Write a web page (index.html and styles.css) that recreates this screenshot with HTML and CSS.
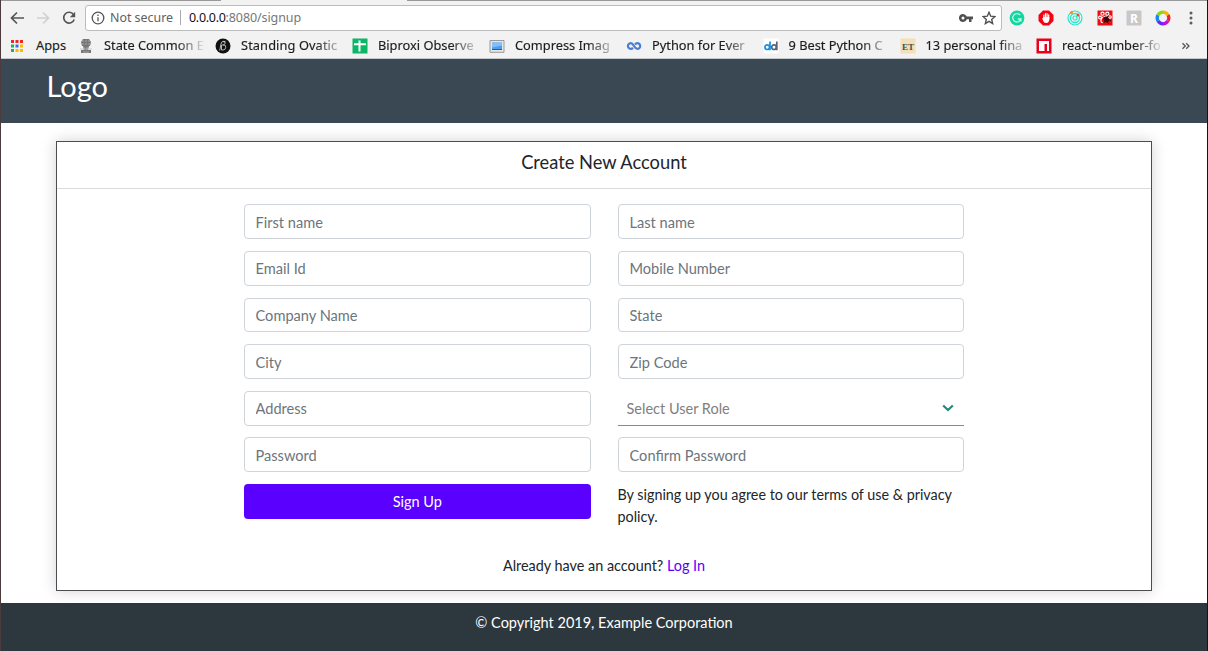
FILE: index.html
```html
<!DOCTYPE html>
<html lang="en">
<head>
<meta charset="utf-8">
<title>Create New Account</title>
<link rel="stylesheet" href="styles.css">
</head>
<body>
<div class="window">
  <div class="browser">
    <div class="tabstrip"></div>
    <div class="toolbar">
      <svg class="nav back" viewBox="0 0 16 16"><path d="M15 8H3M8 2.500 2.500 8 8 13.500"/></svg>
      <svg class="nav forward" viewBox="0 0 16 16"><path d="M2 8h11M8 2.500 13.500 8 8 13.500"/></svg>
      <svg class="nav reload" viewBox="0 0 16 16"><path d="M12.500 4.500A5.400 5.400 0 1 0 13.200 9.500"/><path class="solid" d="M14.200 1.800v5.400H8.800z"/></svg>
      <div class="address">
        <svg class="info" viewBox="0 0 14 14"><circle cx="7" cy="7" r="5.800"/><path d="M7 6.200V10.300M7 3.600V5"/></svg>
        <span class="secure">Not secure</span>
        <span class="divider"></span>
        <span class="url"><span class="host">0.0.0.0</span><span class="path">:8080/signup</span></span>
        <svg class="key" viewBox="0 0 14 10"><path fill-rule="evenodd" d="M4 1a4 4 0 1 0 3.800 5.200H10V9h2.500V6.200H14V3.500H7.700A4 4 0 0 0 4 1zm0 2.500a1.500 1.500 0 1 1 0 3 1.500 1.500 0 0 1 0-3z"/></svg>
        <svg class="star" viewBox="0 0 14 14"><path d="m7 1.300 1.700 3.900 4.200.4-3.200 2.800.95 4.200L7 10.400l-3.650 2.200.95-4.200L1.100 5.600l4.200-.4z"/></svg>
      </div>
      <div class="extensions">
        <svg viewBox="0 0 16 16"><circle cx="8" cy="8" r="7.400" fill="#11d6a0"/><path d="M11.300 5.200A4.200 4.200 0 1 0 12 9H8.800M11.900 8.500v3" fill="none" stroke="#c4f9e8" stroke-width="1.300"/></svg>
        <svg viewBox="0 0 16 16"><path d="M5 .5h6L15.500 5v6L11 15.500H5L.5 11V5z" fill="#f70012"/><path d="M5.900 8V5.200M7.500 8V3.700M9.100 8V3.500M10.700 9V4.900" stroke="#fff" stroke-width="1.200" stroke-linecap="round"/><path d="m4 8 1.300.4V7h6v2.500c0 2-1.100 3.400-3.200 3.400-2 0-2.500-1-4.100-4.900z" fill="#fff"/></svg>
        <svg viewBox="0 0 16 16" fill="none" stroke="#24e8ca"><circle cx="8" cy="8" r="7" stroke-width="1.200"/><circle cx="8" cy="8" r="4.500" stroke-width="1.300"/><circle cx="8" cy="8" r="2" stroke-width="1.200"/><circle cx="4.500" cy="2.500" r="1.500" fill="#ff8a18" stroke="none"/><circle cx="11" cy="5" r="1.500" fill="#f24b25" stroke="none"/></svg>
        <svg viewBox="0 0 16 16"><path d="M.5.500h15v15H.5z" fill="#ee0b12"/><g fill="none" stroke="#fff" stroke-width="1.100"><circle cx="5.500" cy="3.700" r="1.600"/><circle cx="10.300" cy="3.700" r="1.600"/><circle cx="3" cy="7.500" r="1.400"/><circle cx="13" cy="7" r="1.300"/><path d="M6 7C3.500 8.500 3 12.500 5.800 12.800M6.500 6.500l4-.5"/></g><ellipse cx="9.300" cy="9.500" rx="3" ry="2.500" transform="rotate(40 9.300 9.500)" fill="#42060b"/><path d="m9 11 3 3M11 9l3 2M8 11l-1 2M10 7l2-1" stroke="#42060b"/></svg>
        <svg viewBox="0 0 16 16"><path d="M.5.500h15v15H.5z" fill="#c8c8c8"/><text x="8" y="12.500" class="ext-letter">R</text></svg>
        <svg viewBox="0 0 16 16" fill="none" stroke-width="3.300"><path d="M8 2.200A5.800 5.800 0 0 1 13 5.100" stroke="#ffb000"/><path d="M13 5.100A5.800 5.800 0 0 1 13 10.900" stroke="#f2202f"/><path d="M13 10.900A5.800 5.800 0 0 1 8 13.800" stroke="#bf10de"/><path d="M8 13.800A5.800 5.800 0 0 1 3 10.900" stroke="#6a25ff"/><path d="M3 10.900A5.800 5.800 0 0 1 3 5.100" stroke="#1188ee"/><path d="M3 5.100A5.800 5.800 0 0 1 8 2.200" stroke="#8fd513"/></svg>
      </div>
      <svg class="more" viewBox="0 0 4 14"><circle cx="2" cy="2" r="1.500"/><circle cx="2" cy="7" r="1.500"/><circle cx="2" cy="12" r="1.500"/></svg>
    </div>
    <div class="bookmarks">
      <div class="bookmark apps"><svg viewBox="0 0 16 16"><path fill="#f02722" d="M2 2h3v3H2zM6.500 2h3v3h-3zM11 2h3v3h-3z"/><path fill="#16b657" d="M2 6.500h3v3H2zM2 11h3v3H2z"/><path fill="#3968f4" d="M6.500 6.500h3v3h-3z"/><path fill="#ffb800" d="M11 6.500h3v3h-3zM6.500 11h3v3h-3zM11 11h3v3h-3z"/></svg><span class="label">Apps</span></div>
      <div class="bookmark state"><svg viewBox="0 0 16 16"><path d="M5 1h6l2 3-1 4H4L3 4zM5 8h6l-1 4H6zM3 12h10v3H3z" fill="#777"/><path d="M4 3h2M7 3h2M10 3h2M4 6h2M7 6h2M10 6h2M6 9v3M9 9v3M2 11h12M5 14h6" stroke="#bbb" stroke-width=".7"/></svg><span class="label fade">State Common E</span></div>
      <div class="bookmark standing"><svg viewBox="0 0 16 16"><circle cx="8" cy="8" r="7.500" fill="#111"/><path d="M10.500 3.400H8.200Q6.500 3.400 6 6l-1.300 6.500M7 7h2q2 0 1.700 2.500T8 12H6.500V7M8 3.500q3 0 2 2.300Q9.500 7 8 7" fill="none" stroke="#ddd" stroke-width=".8"/></svg><span class="label fade">Standing Ovatic</span></div>
      <div class="bookmark biproxi"><svg viewBox="0 0 16 16"><path d="M.5.500h15v15H.5z" fill="#0bb767"/><path d="M2 6.200h12M7.500 2.500v11" stroke="#fff" stroke-width="2"/></svg><span class="label fade">Biproxi Observe</span></div>
      <div class="bookmark compress"><svg viewBox="0 0 16 16"><path d="M1 2.500h14v11.800H1z" fill="#e7e7e7" stroke="#999"/><path d="M3 4.500h10v7H3z" fill="#4c9fef"/><path d="M3 4.500h10v3L3 9.500z" fill="#83bef8"/><path d="M3 11.500h10" stroke="#1762ae"/></svg><span class="label fade">Compress Imag</span></div>
      <div class="bookmark python"><svg viewBox="0 0 16 16" fill="none" stroke="#477dd6" stroke-width="2.200"><path d="M7 9.800C6 11 4.800 11.200 3.500 10.600A2.900 2.900 0 0 1 3.500 5.400C6 4.300 7 6.300 8 8S10.500 11.500 12.800 10.500A2.900 2.900 0 0 0 12.800 5.500C11.300 4.800 10 5.200 9 6.500"/></svg><span class="label fade">Python for Ever</span></div>
      <div class="bookmark best"><svg viewBox="0 0 16 16"><path d="M.5.500h15v15H.5z" fill="#fff"/><g fill="none" stroke-width="1.700"><g stroke="#168de2"><circle cx="4.200" cy="9.200" r="2.300"/><path d="M7 3.500v8.700"/></g><g stroke="#596273"><circle cx="11" cy="9.200" r="2.300"/><path d="M13.800 3.500v8.700"/></g></g></svg><span class="label fade">9 Best Python C</span></div>
      <div class="bookmark personal"><svg viewBox="0 0 16 16"><path d="M.5.500h15v15H.5z" fill="#f5dfb9"/><text x="8" y="11.500" class="et-letter">ET</text></svg><span class="label fade">13 personal fina</span></div>
      <div class="bookmark react"><svg viewBox="0 0 16 16"><path d="M.5.500h15v15H.5z" fill="#e8001c"/><path d="M3 3h10v10h-2V6H8.500v7H3z" fill="#fff"/></svg><span class="label fade">react-number-fo</span></div>
      <svg class="overflow" viewBox="0 0 10 10"><path d="m1.500 2.200 2.800 2.800-2.800 2.800M5.200 2.200 8 5 5.200 7.800"/></svg>
    </div>
  </div>
  <header class="site-header"><span class="logo">Logo</span></header>
  <main class="content">
    <section class="card">
      <h1 class="card-title">Create New Account</h1>
      <form class="signup">
        <input class="field" placeholder="First name" aria-label="First name">
        <input class="field" placeholder="Last name" aria-label="Last name">
        <input class="field" placeholder="Email Id" aria-label="Email Id">
        <input class="field" placeholder="Mobile Number" aria-label="Mobile Number">
        <input class="field" placeholder="Company Name" aria-label="Company Name">
        <input class="field" placeholder="State" aria-label="State">
        <input class="field" placeholder="City" aria-label="City">
        <input class="field" placeholder="Zip Code" aria-label="Zip Code">
        <input class="field" placeholder="Address" aria-label="Address">
        <div class="role"><span>Select User Role</span><svg viewBox="0 0 12 8"><path d="m1.200 1.500 4.800 4.600 4.800-4.600"/></svg></div>
        <input class="field" type="password" placeholder="Password" aria-label="Password">
        <input class="field" type="password" placeholder="Confirm Password" aria-label="Confirm Password">
        <button class="submit" type="button">Sign Up</button>
        <p class="terms">By signing up you agree to our terms of use &amp; privacy policy.</p>
      </form>
      <p class="login">Already have an account? <a class="login-link" href="#">Log In</a></p>
    </section>
  </main>
  <footer class="site-footer">© Copyright 2019, Example Corporation</footer>
</div>
</body>
</html>
```

FILE: styles.css
```css
* { box-sizing: border-box; }
body { margin: 0; font-family: Lato, sans-serif; font-size: 14.500px; color: #212529; overflow: hidden; }
.window { width: 1208px; height: 651px; display: flex; flex-direction: column; background: #fff; border-left: 1px solid #4b3b3d; border-right: 1px solid #111619; }
.browser { height: 59px; flex: none; background: #f2f2f2; border-bottom: 1px solid #c4c7c9; font-family: "Noto Sans", sans-serif; font-size: 13px; }
.tabstrip { height: 1px; background: linear-gradient(to right, #999 220px, #f2f2f2 220px, #f2f2f2 406px, #999 406px); }
.toolbar { height: 33px; display: flex; align-items: center; padding-left: 8px; }
.nav { width: 16px; height: 16px; flex: none; fill: none; stroke: #555; stroke-width: 1.700; margin-right: 10px; }
.forward { stroke: #d0d0d0; }
.reload { margin-right: 8px; }
.reload .solid { fill: #555; stroke: none; }
.address { width: 917px; height: 26px; flex: none; background: #fff; border: 1px solid #bcbcbc; border-radius: 3px; display: flex; align-items: center; padding: 0 5px; white-space: nowrap; }
.info { width: 14px; height: 14px; flex: none; fill: none; stroke: #555; stroke-width: 1.300; margin-right: 5px; }
.secure { color: #606060; width: 70px; font-size: 12.400px; line-height: 16px; }
.divider { width: 1px; height: 15px; background: #aaa; margin-right: 8px; }
.url { flex: 1; font-size: 12.500px; line-height: 16px; }
.host { color: #111; letter-spacing: -.3px; }
.path { color: #777; letter-spacing: -.1px; }
.key { width: 14px; height: 10px; fill: #505050; margin-right: 9px; }
.star { width: 14px; height: 14px; fill: none; stroke: #505050; stroke-width: 1.400; }
.extensions { display: flex; gap: 13.200px; margin-left: 7px; }
.extensions svg { width: 16px; height: 16px; }
.ext-letter { font: bold 12px "Noto Sans", sans-serif; text-anchor: middle; fill: #fff; }
.more { width: 4px; height: 14px; margin-left: 18px; fill: #5e5e5e; }
.bookmarks { height: 24px; display: flex; align-items: center; padding-left: 8px; }
.bookmark { display: flex; align-items: center; flex: none; height: 24px; }
.bookmark svg { width: 16px; height: 16px; flex: none; }
.bookmark .label { margin-left: 10px; white-space: nowrap; color: #1c1c1c; flex: 1; font-size: 12.800px; line-height: 18px; padding-bottom: 2px; -webkit-text-stroke: .15px #1c1c1c; }
.bookmark .fade { mask-image: linear-gradient(to right, #000 calc(100% - 30px), transparent 100%); }
.bookmark.apps .label { margin-left: 11px; }
.apps { width: 69px; }
.state { width: 137px; padding-right: 9px; }
.standing { width: 137px; padding-right: 6px; }
.biproxi { width: 137px; padding-right: 8px; }
.compress { width: 137px; padding-right: 8px; }
.python { width: 136.500px; padding-right: 8px; }
.best { width: 137px; padding-right: 8px; }
.personal { width: 136.500px; padding-right: 8px; }
.react { width: 137px; padding-right: 9px; }
.standing .label { letter-spacing: .1px; }
.et-letter { font: bold 9px "Liberation Serif", serif; text-anchor: middle; fill: #345453; }
.overflow { width: 10px; height: 10px; margin-left: 8px; fill: none; stroke: #555; stroke-width: 1.300; }
.site-header { height: 64.400px; flex: none; background: #394852; padding: 8px 45.500px; color: #fff; }
.logo { display: block; font-size: 29px; line-height: 38px; }
.content { flex: 1; padding: 18px 55px 11.600px; display: flex; }
.card { flex: 1; border: 1px solid #4b4d50; background: #fff; box-shadow: 0 0 14px rgba(0,0,0,.18); }
.card-title { height: 47px; margin: 0; border-bottom: 1px solid #d8dadb; text-align: center; font-size: 18.300px; font-weight: 400; line-height: 41px; }
.signup { width: 720px; margin: 15.100px auto 0; display: grid; grid-template-columns: 1fr 1fr; column-gap: 27px; row-gap: 11.800px; grid-auto-rows: 34.800px; }
.field { width: 100%; height: 100%; border: 1px solid #ced4da; border-radius: 4px; padding: 1px 11px 0; font: 14.600px Lato, sans-serif; background: #fff; outline: none; }
.field:nth-child(odd) { padding-left: 10.500px; }
.field::placeholder { color: #6c757d; opacity: 1; }
.role { border-bottom: 1px solid #53a395; display: flex; align-items: center; justify-content: space-between; padding: 1px 10px 0 9px; color: #808080; }
.role svg { width: 12px; height: 8px; fill: none; stroke: #26877a; stroke-width: 2.200; }
.submit { border: 0; border-radius: 4px; background: #5900ff; color: #fff; font: 14.500px Lato, sans-serif; }
.terms { margin: 0; font-size: 14.350px; line-height: 22.300px; }
.login { margin: 35.400px 0 0; text-align: center; font-size: 14.400px; line-height: 23px; }
.login-link { color: #5900ff; text-decoration: none; }
.site-footer { height: 48px; flex: none; background: #2d383e; color: #fff; text-align: center; line-height: 40px; }
```
